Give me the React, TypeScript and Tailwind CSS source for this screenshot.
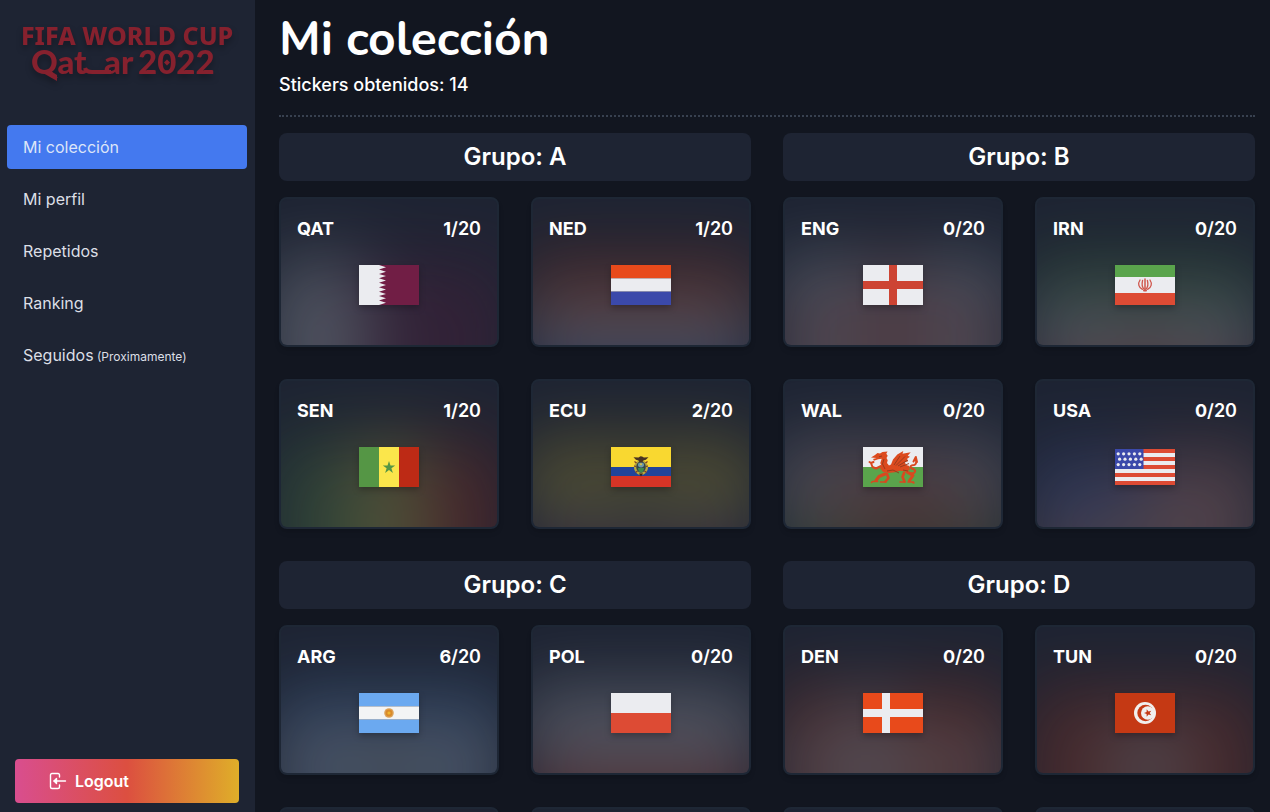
import React from "react";

type Team = { code: string; owned: number };
type Group = { name: string; teams: Team[] };

const groups: Group[] = [
  {
    name: "A",
    teams: [
      { code: "QAT", owned: 1 },
      { code: "NED", owned: 1 },
      { code: "SEN", owned: 1 },
      { code: "ECU", owned: 2 },
    ],
  },
  {
    name: "B",
    teams: [
      { code: "ENG", owned: 0 },
      { code: "IRN", owned: 0 },
      { code: "WAL", owned: 0 },
      { code: "USA", owned: 0 },
    ],
  },
  {
    name: "C",
    teams: [
      { code: "ARG", owned: 6 },
      { code: "POL", owned: 0 },
      { code: "MEX", owned: 0 },
      { code: "KSA", owned: 3 },
    ],
  },
  {
    name: "D",
    teams: [
      { code: "DEN", owned: 0 },
      { code: "TUN", owned: 0 },
      { code: "FRA", owned: 0 },
      { code: "AUS", owned: 0 },
    ],
  },
];

const WHITE = "#ebecf0";
const RED = "#dd4b34";
const GREEN = "#5aa44c";
const BLUE = "#3b49aa";

function Bands({ colors, vertical = false }: { colors: string[]; vertical?: boolean }) {
  const n = colors.length;
  return (
    <>
      {colors.map((c, i) =>
        vertical ? (
          <rect key={i} x={(60 / n) * i} width={60 / n} height="40" fill={c} />
        ) : (
          <rect key={i} y={(40 / n) * i} width="60" height={40 / n} fill={c} />
        ),
      )}
    </>
  );
}

/* Flags share a 60 x 40 drawing area. */
const flags: Record<string, React.ReactNode> = {
  QAT: (
    <>
      <rect width="60" height="40" fill="#711e45" />
      <path
        fill={WHITE}
        d="M0 0H20L27 2.2 20 4.4 27 6.7 20 8.9 27 11.1 20 13.3 27 15.6 20 17.8 27 20 20 22.2 27 24.4 20 26.7 27 28.9 20 31.1 27 33.3 20 35.6 27 37.8 20 40H0z"
      />
    </>
  ),
  NED: <Bands colors={["#e84a1b", WHITE, BLUE]} />,
  SEN: (
    <>
      <Bands vertical colors={["#559645", "#fbe64b", "#bd2a15"]} />
      <path fill="#559645" d="M30 14l1.500 4.500h4.700l-3.800 2.800 1.500 4.600-3.900-2.900-3.900 2.900 1.500-4.600-3.800-2.800h4.700z" />
    </>
  ),
  ECU: (
    <>
      <rect width="60" height="20" fill="#f9d830" />
      <rect y="20" width="60" height="9" fill="#20449a" />
      <rect y="29" width="60" height="11" fill="#d63426" />
      <ellipse cx="30" cy="20.5" rx="7" ry="7.6" fill="#b9a83c" />
      <path d="M23.500 14.500l2 1.500M36.500 14.500l-2 1.500M23 19l2 .5M37 19l-2 .5M24.500 25.500l2-1.500M35.500 25.500l-2-1.500" stroke="#7a3a28" strokeWidth="1.2" />
      <ellipse cx="30" cy="20" rx="4.800" ry="5.800" fill="#33454a" />
      <ellipse cx="30" cy="18" rx="3" ry="2.400" fill="#6f9aa6" />
      <path d="M26.800 21h6.400l-1 3.400-2.200 1.200-2.200-1.200z" fill="#3f8a4c" />
      <circle cx="30" cy="17.200" r="1" fill="#e3c53e" />
      <path
        d="M22.500 10.300l5 .2 2-1.200 1.600.2 1.800 1 4.600-.2-2.600 2.400-2.600.8-1 1.800h-2.800l-1-1.800-2.600-.8z"
        fill="#4a3421"
      />
      <path d="M28 26.500l2 3 2-3z" fill="#2c2320" />
    </>
  ),
  ENG: (
    <>
      <rect width="60" height="40" fill={WHITE} />
      <path fill="#cd4433" d="M26 0h8v16h26v8H34v16h-8V24H0v-8h26z" />
    </>
  ),
  IRN: (
    <>
      <rect width="60" height="40" fill={WHITE} />
      <rect width="60" height="12" fill={GREEN} />
      <rect y="28" width="60" height="12" fill={RED} />
      <g fill="none" stroke="#d0564c" strokeLinecap="round">
        <path strokeWidth="1.500" d="M30 14v11" />
        <path strokeWidth="1.300" d="M27.600 15.500c-.8 3-.6 6.500 1.400 8.500M32.400 15.500c.8 3 .6 6.500-1.400 8.500M25 15c-2.400 3.500-1.400 7.800 2.400 9.300M35 15c2.400 3.500 1.400 7.800-2.400 9.300" />
        <path strokeWidth="2" d="M29 25.400h2" />
      </g>
    </>
  ),
  WAL: (
    <>
      <rect width="60" height="20" fill={WHITE} />
      <rect y="20" width="60" height="20" fill={GREEN} />
      <g fill="none" stroke="#d9481f" strokeLinecap="round" strokeLinejoin="round">
        <path strokeWidth="2" d="M18 19l-5 2.500-3.500-1.500-1.500-4M8 16l-1.500-1M8 16l2.500-1" />
        <path strokeWidth="3" d="M22 27l-6 2.500-3 4M44 25l6 3.500-3.500 5" />
        <path strokeWidth="2.600" d="M24 27l1.500 4-3 3.500M41 26l-1.500 4 2 4.500" />
        <path strokeWidth="1.600" d="M9.500 34.500h5M17.500 35h5.500M37 35h5M45 35h5.500M9.500 34.500l-1 1M49 35l2 1" />
        <path strokeWidth="2" d="M47 26c6 1 7-3 2-4.500-3-1.500-1-3.500 2-3.500 2.500-.5 2.500-3 2-6M50.500 14.500l2.300-4.500 1.200 5" />
      </g>
      <path
        fill="#dc4a1e"
        d="M8 10.500l4-2.500 2.500-2 2.500.5 2.500-1.500 5-.500-1.200 2.200 1.400 2-1.200 2.300 1.200 2.200-.7 2.700 2 2.500 2-1 2-5 4.300-5 6-3.400-.8 2.700 8.200-1.500-3 3.600 2.200.9-3 2.300 1.200 2.300-3 .8.600 2.600 3.600 1.400.4 3.600-3.600 2-6-1-5 1.600-7 .8-5-1.200-3-3.400 1.200-3-1-2.600 1.400-4.200-3.600.6-4.200 1.500-.8-1.700 3.600-1.200z"
      />
      <path
        d="M19 9l-3 .8M21 12l-1.500 5 2.500 5M31 18l6-9M33 18.500l9-9M35 19l10-6M37 20l9-3.500M24 24l6-1 6 3M40 23l5 1"
        fill="none"
        stroke="#8e3a1f"
        strokeWidth="0.900"
      />
    </>
  ),
  USA: (
    <>
      <rect y="2" width="60" height="36" fill={WHITE} />
      {[2, 10, 18, 26, 34].map((y) => (
        <rect key={y} y={y} width="60" height="4" fill={RED} />
      ))}
      <rect y="2" width="28.500" height="20" fill={BLUE} />
      {[3.2, 8.6, 14, 19.4, 24.8].map((x) => (
        <g key={x} fill={WHITE}>
          <circle cx={x} cy="6.800" r="1.600" />
          <circle cx={x + 1.4} cy="12.200" r="1.600" />
          <circle cx={x} cy="17.600" r="1.600" />
        </g>
      ))}
    </>
  ),
  ARG: (
    <>
      <Bands colors={["#6ba9f0", "#f3f4f5", "#6ba9f0"]} />
      <circle cx="30" cy="20" r="4.800" fill="#dda45a" />
      <circle cx="30" cy="20" r="3.400" fill="#d98a2b" />
      <circle cx="30" cy="20" r="1.600" fill="#efb52e" />
    </>
  ),
  POL: <Bands colors={[WHITE, RED]} />,
  MEX: <Bands vertical colors={[GREEN, WHITE, RED]} />,
  KSA: <rect width="60" height="40" fill={GREEN} />,
  DEN: (
    <>
      <rect width="60" height="40" fill="#e84a1b" />
      <path fill={WHITE} d="M19 0h8v16h33v8H27v16h-8V24H0v-8h19z" />
    </>
  ),
  TUN: (
    <>
      <rect width="60" height="40" fill="#c53914" />
      <circle cx="30" cy="20" r="11" fill="#f1efee" />
      <circle cx="30.500" cy="20" r="8.200" fill="#c53914" />
      <circle cx="32.800" cy="20" r="6.800" fill="#f1efee" />
      <path fill="#c53914" d="M29 20l2.600-.9.1-2.800 1.800 2.200 2.700-.8-1.500 2.300 1.500 2.300-2.700-.8-1.800 2.200-.1-2.800z" />
    </>
  ),
  FRA: <Bands vertical colors={[BLUE, WHITE, RED]} />,
  AUS: <rect width="60" height="40" fill={BLUE} />,
};

function Flag({ code, className }: { code: string; className: string }) {
  return (
    <svg viewBox="0 0 60 40" preserveAspectRatio="none" className={className} aria-hidden="true">
      {flags[code]}
    </svg>
  );
}

function TeamCard({ team }: { team: Team }) {
  return (
    <a
      href={`#${team.code}`}
      className="relative flex h-[150px] flex-col overflow-hidden rounded-lg border-2 border-[#1e2735] bg-[#1e2433] px-4 pt-4 shadow-md"
    >
      <Flag
        code={team.code}
        className="absolute top-[60px] left-[-5%] h-40 w-[110%] opacity-25 blur-[36px]"
      />
      <div className="relative flex justify-between text-lg leading-7 font-semibold">
        <span className="font-bold">{team.code}</span>
        <span>
          <b className="font-bold">{team.owned}</b>/20
        </span>
      </div>
      <Flag
        code={team.code}
        className="relative mx-auto mt-[22px] h-10 w-[60px] drop-shadow-[0_3px_3px_rgba(0,0,0,0.25)]"
      />
    </a>
  );
}

function GroupSection({ group }: { group: Group }) {
  return (
    <section className="flex flex-col gap-4">
      <h2 className="flex h-12 items-center justify-center rounded-lg bg-[#1e2433] text-2xl font-semibold">
        Grupo: {group.name}
      </h2>
      <div className="grid grid-cols-2 gap-8">
        {group.teams.map((team) => (
          <TeamCard key={team.code} team={team} />
        ))}
      </div>
    </section>
  );
}

function Logo() {
  return (
    <svg
      viewBox="0 0 216 64"
      className="h-16 w-[216px] drop-shadow-[0_4px_3px_rgba(0,0,0,0.3)]"
      fill="#86212e"
      role="img"
      aria-label="FIFA World Cup Qatar 2022"
    >
      <text x="2" y="25" fontFamily="'Noto Sans', 'Open Sans', sans-serif" fontWeight="800" fontSize="25">
        FIFA WORLD CUP
      </text>
      <text y="54" fontFamily="Lato, sans-serif" fontWeight="900" fontSize="33">
        <tspan x="12">Qat</tspan>
        <tspan x="85">ar</tspan>
        <tspan x="119">2022</tspan>
      </text>
      <path d="M66 48Q67 52 73 52H92" fill="none" stroke="#86212e" strokeWidth="4" />
      <path d="M30 50l8 5v6l-14-8z" />
      <path d="M148 39.500l3 3-3 3-3-3z" />
    </svg>
  );
}

function LogoutIcon() {
  return (
    <svg
      viewBox="0 0 18 18"
      className="size-[18px]"
      fill="none"
      stroke="currentColor"
      strokeWidth="1.400"
      strokeLinecap="round"
      strokeLinejoin="round"
      aria-hidden="true"
    >
      <path d="M10.500 5V3Q10.500 1.500 9 1.500H3Q1.500 1.500 1.500 3V15Q1.500 16.500 3 16.500H9Q10.500 16.500 10.500 15V13" />
      <path d="M16.500 9H5" />
      <path d="M7.500 6.500L5 9l2.500 2.500z" fill="currentColor" />
    </svg>
  );
}

const navItems: { label: string; note?: string; active?: boolean }[] = [
  { label: "Mi colección", active: true },
  { label: "Mi perfil" },
  { label: "Repetidos" },
  { label: "Ranking" },
  { label: "Seguidos", note: "(Proximamente)" },
];

function Sidebar() {
  return (
    <aside className="flex w-[255px] shrink-0 flex-col bg-[#1e2433] pr-2 pb-[9px] pl-[7px]">
      <div className="flex h-[125px] justify-center pt-5">
        <Logo />
      </div>
      <nav className="flex flex-col gap-2">
        {navItems.map((item) => (
          <a
            key={item.label}
            href="#"
            aria-current={item.active ? "page" : undefined}
            className={
              item.active
                ? "flex h-11 items-center rounded bg-[#4479ef] px-4 text-[#dde5f8]"
                : "flex h-11 items-center rounded px-4 text-[#dcdfe6]"
            }
          >
            <span>
              {item.label}
              {item.note && <span className="text-xs"> {item.note}</span>}
            </span>
          </a>
        ))}
      </nav>
      <div className="mt-auto px-2">
        <button
          type="button"
          className="flex h-11 w-full items-center gap-2 rounded bg-linear-to-r/srgb from-[#d94e8f] via-[#dc4f40] to-[#dfae29] px-[34px] font-semibold text-white"
        >
          <LogoutIcon />
          Logout
        </button>
      </div>
    </aside>
  );
}

export default function App() {
  return (
    <div className="flex h-screen bg-[#121620] font-[Inter,'Liberation_Sans',sans-serif] text-white">
      <Sidebar />
      <main className="min-w-0 flex-1 overflow-y-auto pr-[15px] pb-8 pl-6 [scrollbar-width:none]">
        <header className="mb-4 border-b-2 border-dotted border-[#384150] pt-[11px] pb-4">
          <h1 className="font-[Nunito,'Open_Sans',sans-serif] text-5xl font-bold leading-[56px]">Mi colección</h1>
          <p className="mt-1 text-lg leading-7 font-medium">Stickers obtenidos: 14</p>
        </header>
        <div className="grid grid-cols-2 gap-8">
          {groups.map((group) => (
            <GroupSection key={group.name} group={group} />
          ))}
        </div>
      </main>
    </div>
  );
}
